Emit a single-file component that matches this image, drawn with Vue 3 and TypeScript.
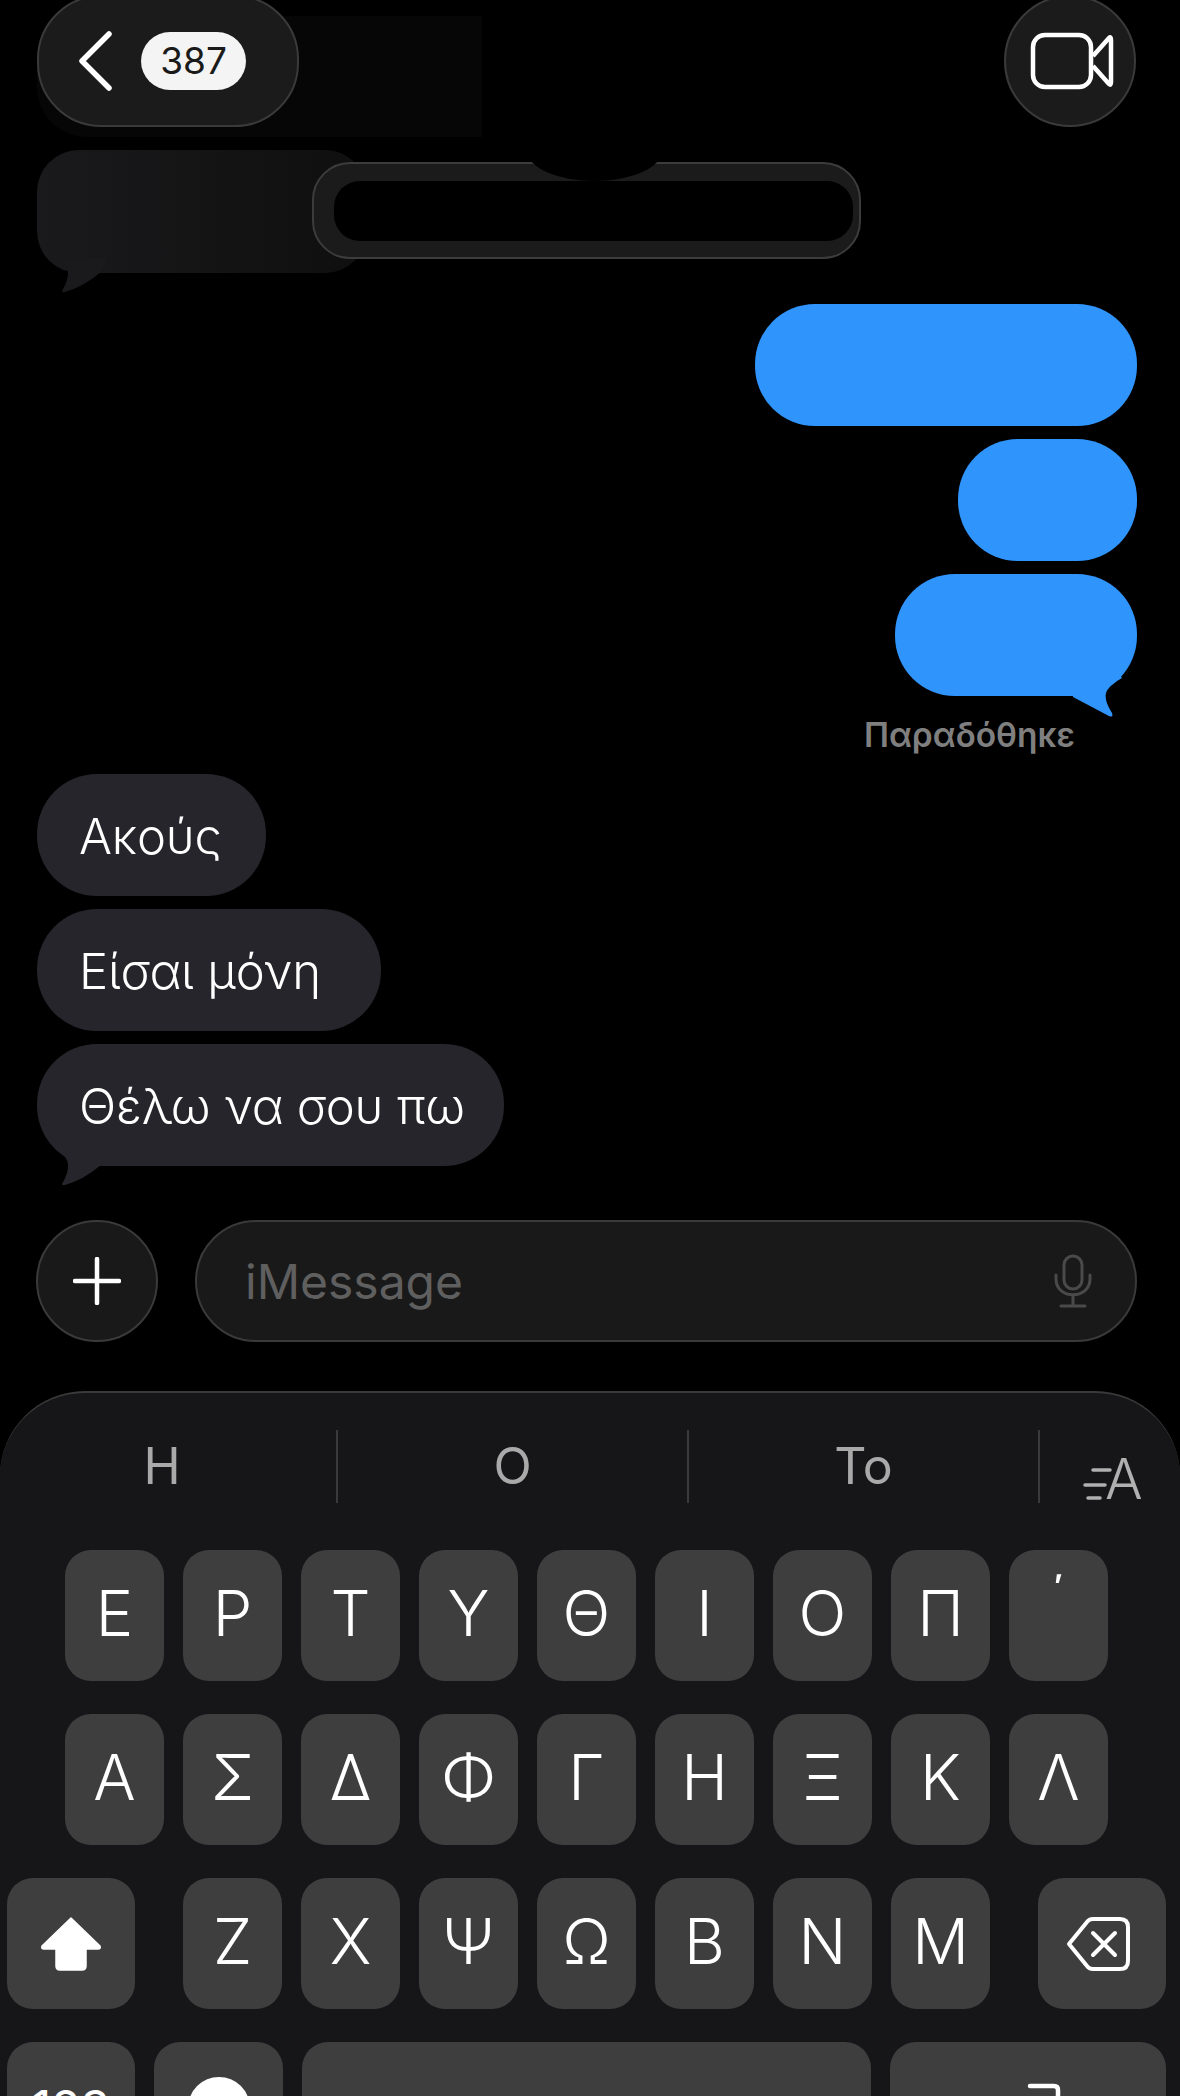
<script setup lang="ts">
const rowOne = ['Ε', 'Ρ', 'Τ', 'Υ', 'Θ', 'Ι', 'Ο', 'Π', '΄']
const rowTwo = ['Α', 'Σ', 'Δ', 'Φ', 'Γ', 'Η', 'Ξ', 'Κ', 'Λ']
const rowThree = ['Ζ', 'Χ', 'Ψ', 'Ω', 'Β', 'Ν', 'Μ']
const blueBubbles = [
  { id: 'b1', width: 382 },
  { id: 'b2', width: 179 }
]
const grayBubbles = [
  { text: 'Ακούς', width: 229, tail: false },
  { text: 'Είσαι μόνη', width: 344, tail: false },
  { text: 'Θέλω να σου πω', width: 467, tail: true }
]
</script>

<template>
  <div class="screen">
    <!-- floating header -->
    <div class="back-pill">
      <svg class="chevron" viewBox="0 0 38 62" width="38" height="62">
        <path d="M32 4 L5 31 L32 58" fill="none" stroke="#fff" stroke-width="5.5" stroke-linecap="round" stroke-linejoin="round" />
      </svg>
      <span class="badge">387</span>
    </div>
    <div class="video-btn">
      <svg viewBox="0 0 84 58" width="84" height="58">
        <rect x="3" y="3" width="58" height="52" rx="12" fill="none" stroke="#fff" stroke-width="4.5" />
        <path d="M63 24 L79 6 Q81 4 81 8 V50 Q81 54 79 52 L63 34" fill="none" stroke="#fff" stroke-width="4.5" stroke-linejoin="round" />
      </svg>
    </div>

    <main class="messages">
      <div class="blob-faint"></div>
      <div class="redacted-row">
        <div class="bubble-dim">
          <svg class="tail-left" viewBox="0 0 50 34" width="50" height="34">
            <path d="M0 0 Q6 6 7 12 Q8 20 1 32 Q1 34 4 33 Q22 28 40 13 L46 0 Z" fill="#1a1a1c" />
          </svg>
        </div>
        <div class="redacted-pill"><div class="redacted-inner"></div></div>
        <div class="notch"></div>
      </div>

      <div
        v-for="bubble in blueBubbles"
        :key="bubble.id"
        class="bubble blue"
        :style="{ width: bubble.width + 'px' }"
      ></div>
      <div class="bubble blue last">
        <svg class="tail-right" viewBox="0 0 72 50" width="72" height="50">
          <path d="M8 29 L42 47 Q49 51 47 45 Q36 28 44 20 Q48 15 57 10 L50 0 L8 0 Z" fill="#2f94fb" />
        </svg>
      </div>
      <div class="delivered">Παραδόθηκε</div>

      <div
        v-for="msg in grayBubbles"
        :key="msg.text"
        class="bubble gray"
        :style="{ width: msg.width + 'px' }"
      >
        {{ msg.text }}
        <svg v-if="msg.tail" class="tail-left" viewBox="0 0 50 34" width="50" height="34">
          <path d="M0 0 Q6 6 7 12 Q8 20 1 32 Q1 34 4 33 Q22 28 40 13 L46 0 Z" fill="#25252b" />
        </svg>
      </div>
    </main>

    <div class="composer">
      <div class="plus-btn">
        <svg viewBox="0 0 48 48" width="48" height="48">
          <path d="M24 2 V46 M2 24 H46" stroke="#fff" stroke-width="4.5" stroke-linecap="round" />
        </svg>
      </div>
      <div class="input">
        <span class="placeholder">iMessage</span>
        <svg class="mic" viewBox="0 0 38 54" width="38" height="54">
          <rect x="10" y="2" width="18" height="33" rx="9" fill="none" stroke="#4a4a4a" stroke-width="3" />
          <path d="M2 21 V25 C2 46 36 46 36 25 V21 M19 42 V52 M7 52 H31" fill="none" stroke="#4a4a4a" stroke-width="3" stroke-linecap="round" />
        </svg>
      </div>
    </div>

    <section class="keyboard">
      <div class="suggestions">
        <div class="sugg first">Η</div>
        <div class="divider"></div>
        <div class="sugg">Ο</div>
        <div class="divider"></div>
        <div class="sugg">Το</div>
        <div class="divider"></div>
        <div class="writing">
          <svg viewBox="0 0 30 36" width="30" height="36">
            <path d="M10 4 H27 M2 19 H22 M5 32 H17" stroke="#b0b0b0" stroke-width="3.5" stroke-linecap="round" />
          </svg>
          <span>A</span>
        </div>
      </div>

      <div class="key-row">
        <div v-for="k in rowOne" :key="k" class="key" :class="{ tonos: k === '΄' }">{{ k }}</div>
      </div>
      <div class="key-row">
        <div v-for="k in rowTwo" :key="k" class="key">{{ k }}</div>
      </div>
      <div class="key-row edge">
        <div class="key wide shift">
          <svg viewBox="0 0 62 56" width="62" height="56">
            <path d="M31 2 L60 30 Q61 33 58 33 H46 V50 Q46 54 42 54 H20 Q16 54 16 50 V33 H4 Q1 33 2 30 Z" fill="#fff" stroke="#fff" stroke-width="1.5" stroke-linejoin="round" />
          </svg>
        </div>
        <div class="letters">
          <div v-for="k in rowThree" :key="k" class="key">{{ k }}</div>
        </div>
        <div class="key wide">
          <svg class="delete-icon" viewBox="0 0 64 54" width="64" height="54">
            <path d="M3 27 L21 5 Q23 2 27 2 H54 Q62 2 62 10 V44 Q62 52 54 52 H27 Q23 52 21 49 Z" fill="none" stroke="#fff" stroke-width="4" stroke-linejoin="round" />
            <path d="M27 16 L49 38 M49 16 L27 38" stroke="#fff" stroke-width="4" stroke-linecap="round" />
          </svg>
        </div>
      </div>
      <div class="key-row bottom">
        <div class="key wide small">123</div>
        <div class="key emoji"><span class="emoji-face"></span></div>
        <div class="key space"></div>
        <div class="key return">
          <svg class="return-icon" viewBox="0 0 64 50" width="64" height="50">
            <path d="M30 3 H54 Q58 3 58 7 V24 Q58 28 54 28 H8 M18 17 L6 28 L18 39" fill="none" stroke="#fff" stroke-width="4.5" stroke-linecap="round" stroke-linejoin="round" />
          </svg>
        </div>
      </div>
    </section>
  </div>
</template>

<style>
html,
body {
  background: #000;
}
</style>

<style scoped>
.screen {
  position: relative;
  width: 1180px;
  height: 2096px;
  overflow: hidden;
  background: #000;
  font-family: Inter, "Liberation Sans", sans-serif;
  color: #fff;
}

.back-pill {
  position: absolute;
  left: 37px;
  top: -5px;
  width: 262px;
  height: 132px;
  box-sizing: border-box;
  display: flex;
  align-items: center;
  padding: 0 0 0 38px;
  border-radius: 64px;
  background: #1b1b1c;
  border: 2px solid #3a3a3a;
  z-index: 3;
}

.chevron {
  margin-right: 26px;
}

.badge {
  width: 105px;
  height: 58px;
  border-radius: 29px;
  background: #f4f4f4;
  color: #1a1a1a;
  font-size: 37px;
  line-height: 58px;
  text-align: center;
}

.video-btn {
  position: absolute;
  left: 1004px;
  top: -5px;
  width: 132px;
  height: 132px;
  box-sizing: border-box;
  display: flex;
  align-items: center;
  justify-content: center;
  padding-left: 4px;
  border-radius: 50%;
  background: #1b1b1c;
  border: 2px solid #3a3a3a;
  z-index: 3;
}

.messages {
  display: flex;
  flex-direction: column;
  padding: 16px 43px 0 37px;
  align-items: flex-start;
}

.blob-faint {
  width: 445px;
  height: 121px;
  margin-bottom: 13px;
  background: #060606;
  border-radius: 40px 0 0 50px;
}

.redacted-row {
  position: relative;
  width: 100%;
  height: 123px;
  margin-bottom: 31px;
}

.bubble-dim {
  position: relative;
  width: 330px;
  height: 123px;
  border-radius: 42px;
  background: linear-gradient(90deg, #1a1a1c 0%, #131314 60%, #0f0f10 100%);
}

.bubble-dim .tail-left {
  position: absolute;
  left: 24px;
  bottom: -20px;
}

.redacted-pill {
  position: absolute;
  left: 275px;
  top: 12px;
  width: 549px;
  height: 97px;
  box-sizing: border-box;
  border-radius: 38px;
  background: #1b1b1c;
  border: 2px solid #3c3c3c;
  display: flex;
  align-items: center;
  padding: 0 6px 0 20px;
}

.redacted-inner {
  flex: 1;
  height: 60px;
  border-radius: 26px;
  background: #000;
}

.notch {
  position: absolute;
  left: 490px;
  top: -30px;
  width: 135px;
  height: 61px;
  border-radius: 50%;
  background: #000;
}

.bubble {
  position: relative;
  height: 122px;
  margin-bottom: 13px;
  box-sizing: border-box;
  border-radius: 60px;
  font-size: 49px;
  font-weight: 350;
  line-height: 125px;
  white-space: nowrap;
}

.blue {
  align-self: flex-end;
  background: #2f94fb;
}

.blue.last {
  width: 242px;
  margin-bottom: 0;
}

.tail-right {
  position: absolute;
  right: 0;
  bottom: -22px;
}

.delivered {
  align-self: flex-end;
  margin: 19px 62px 19px 0;
  line-height: 40px;
  font-size: 33.5px;
  font-weight: 600;
  color: #7f7f7f;
}

.gray {
  background: #25252b;
  padding-left: 42px;
  letter-spacing: -0.2px;
}

.gray .tail-left {
  position: absolute;
  left: 24px;
  bottom: -20px;
}

.composer {
  display: flex;
  align-items: center;
  gap: 37px;
  padding: 0 43px 0 36px;
  margin-top: 41px;
}

.plus-btn {
  flex: none;
  width: 122px;
  height: 122px;
  box-sizing: border-box;
  display: flex;
  align-items: center;
  justify-content: center;
  border-radius: 50%;
  background: #191919;
  border: 2px solid #3a3a3a;
}

.input {
  flex: 1;
  height: 122px;
  box-sizing: border-box;
  display: flex;
  align-items: center;
  justify-content: space-between;
  padding: 0 43px 0 48px;
  border-radius: 61px;
  background: #191919;
  border: 2px solid #3a3a3a;
}

.placeholder {
  font-size: 48px;
  color: #5f5f5f;
}

.keyboard {
  margin-top: 49px;
  height: 760px;
  box-sizing: border-box;
  border-top: 2px solid #3a3a3a;
  border-radius: 85px 85px 0 0;
  background: #161618;
  padding-top: 37px;
}

.suggestions {
  display: flex;
  height: 73px;
  margin-bottom: 47px;
}

.sugg {
  width: 349px;
  font-size: 50px;
  line-height: 73px;
  text-align: center;
  color: #a9a9a9;
}

.sugg.first {
  width: 324px;
  margin-right: 12px;
}

.divider {
  width: 2px;
  background: #3a3a3a;
}

.writing {
  display: flex;
  align-items: flex-end;
  height: 80px;
  padding-left: 43px;
  color: #b0b0b0;
  font-size: 56px;
  font-weight: 300;
  line-height: 62px;
}

.writing span {
  margin-left: -8px;
}

.writing svg {
  margin-bottom: 8px;
}

.key-row {
  display: flex;
  justify-content: flex-start;
  gap: 19px;
  margin-bottom: 33px;
  padding-left: 65px;
}

.key-row.edge {
  gap: 48px;
  padding-left: 7px;
}

.key-row.bottom {
  padding-left: 7px;
}

.letters {
  display: flex;
  gap: 19px;
}

.key {
  flex: none;
  width: 99px;
  height: 131px;
  box-sizing: border-box;
  display: flex;
  align-items: center;
  justify-content: center;
  padding-bottom: 5px;
  border-radius: 26px;
  background: #3e3e3f;
  font-size: 63px;
  font-weight: 350;
  line-height: 1;
}

.key.tonos {
  align-items: flex-start;
  padding-top: 18px;
}

.key.wide {
  width: 128px;
  padding-bottom: 0;
}

.key.small {
  font-size: 48px;
  font-weight: 400;
}

.key.emoji {
  width: 129px;
  padding-bottom: 0;
}

.emoji-face {
  width: 62px;
  height: 62px;
  border-radius: 50%;
  background: #fff;
}

.key.space {
  width: 569px;
}

.key.return {
  width: 276px;
  padding-bottom: 0;
}

.delete-icon {
  margin-right: 8px;
}

.return-icon {
  margin-left: 8px;
}
</style>
